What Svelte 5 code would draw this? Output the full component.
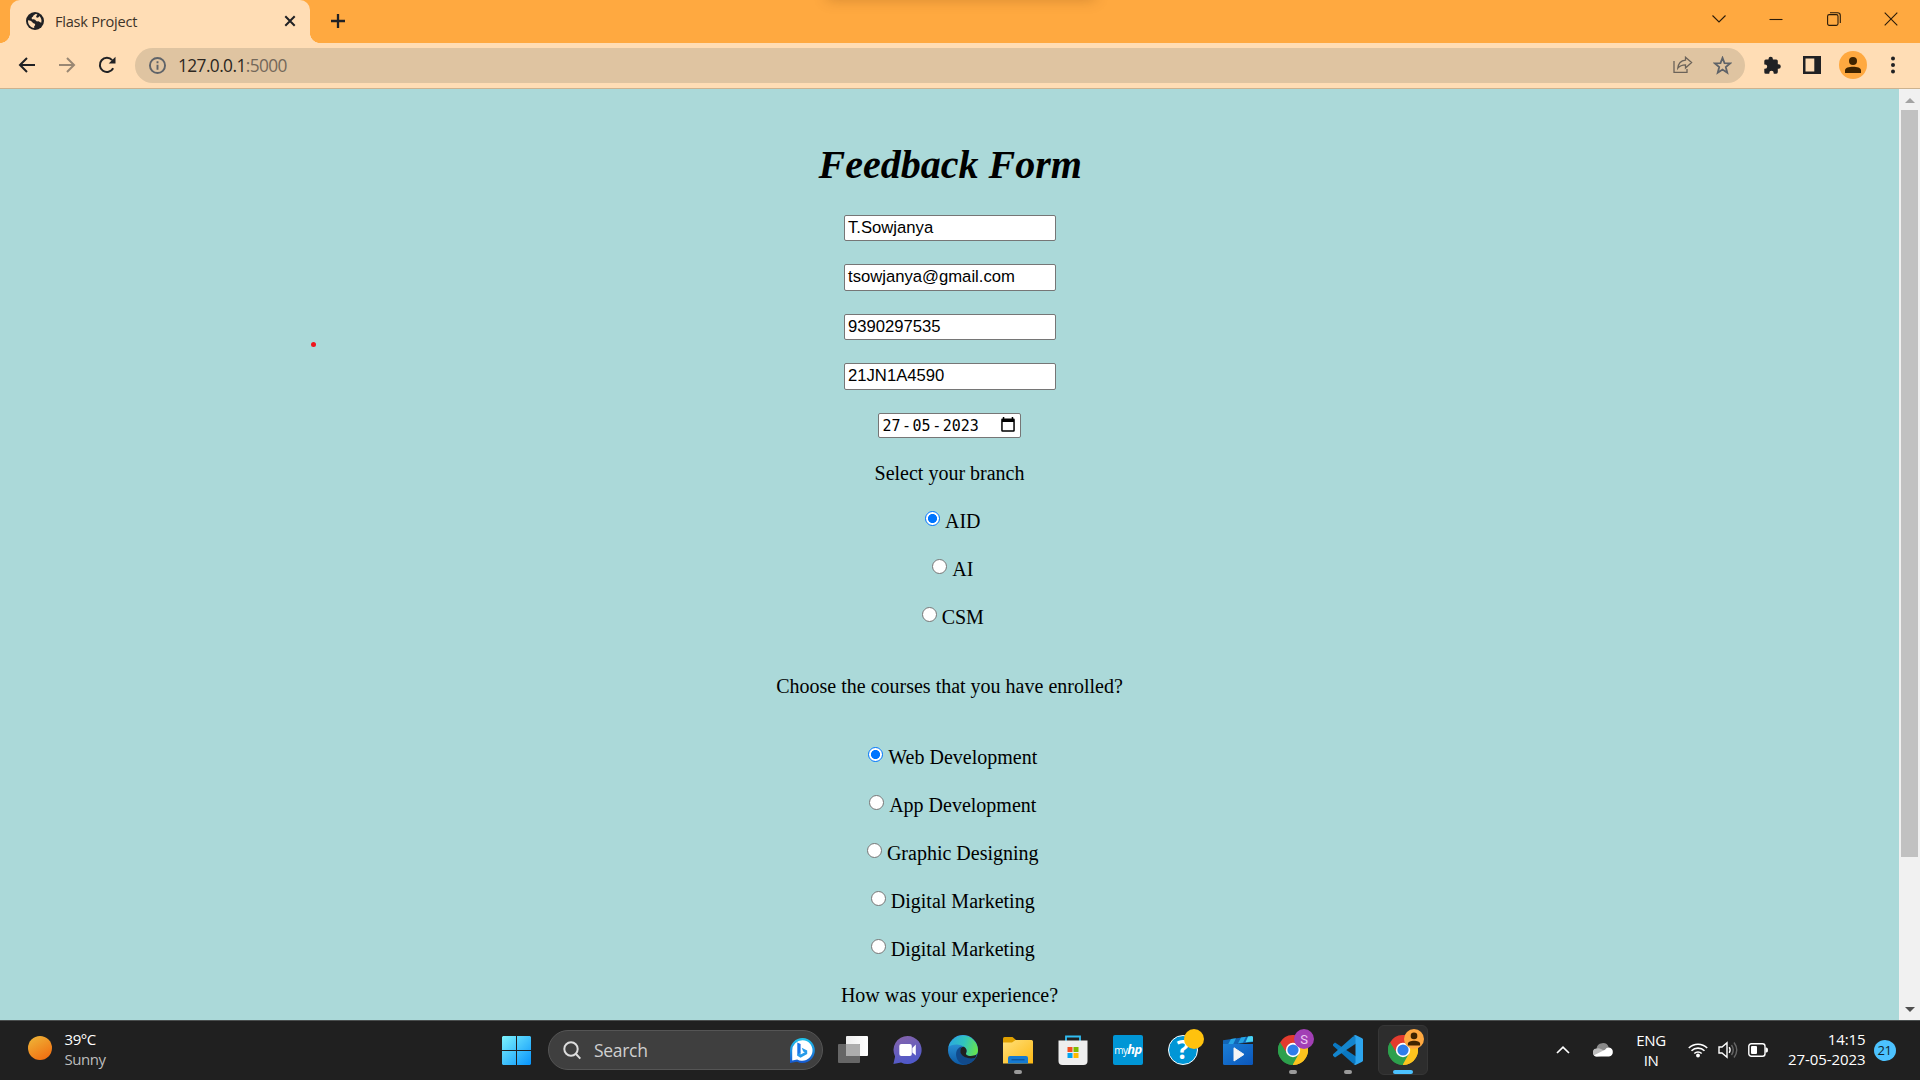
<script>
  const fields = [
    { value: 'T.Sowjanya', h: 26 },
    { value: 'tsowjanya@gmail.com', h: 27 },
    { value: '9390297535', h: 26 },
    { value: '21JN1A4590', h: 27 }
  ];
  const branches = ['AID', 'AI', 'CSM'];
  const courses = ['Web Development', 'App Development', 'Graphic Designing', 'Digital Marketing', 'Digital Marketing'];
</script>

{#snippet chromeLogo()}
  <svg class="app-icon" viewBox="0 0 30 30">
    <path d="M15 15 L2 7.5 A15 15 0 0 1 28 7.5 Z" fill="#e33b2e" />
    <path d="M15 15 L28 7.5 A15 15 0 0 1 15 30 Z" fill="#fcc31e" />
    <path d="M15 15 L15 30 A15 15 0 0 1 2 7.5 Z" fill="#2da04c" />
    <path d="M15 8H28.3A15 15 0 0 1 15 30L21 18.5Z" fill="#fcc31e" />
    <path d="M2 7.5L8.9 18.5L15 15V8Z" fill="#e33b2e" />
    <path d="M2 7.5L9 18.6Q12 22 15 22L21 18.6L14.5 30A15 15 0 0 1 2 7.5Z" fill="#2da04c" />
    <circle cx="15" cy="15" r="7.2" fill="#fff" />
    <circle cx="15" cy="15" r="5.6" fill="#2f7de9" />
  </svg>
{/snippet}

{#snippet choice(label, on)}
  <div class="choice">
    <span class="radio" class:on></span><span>{label}</span>
  </div>
{/snippet}

<div class="screen">
  <header class="tabs">
    <div class="tab">
      <svg class="globe" viewBox="0 0 18 18">
        <circle cx="9" cy="9" r="9" fill="#202124" />
        <path d="M9.6 1.9C8.8 2.8 7.4 2.7 7.2 4.1C7.1 5.4 5.7 5 5.6 6.1C5.5 7.4 7.1 7.4 8.3 7.5C9.9 7.6 9.7 9.6 11.3 9.4C12.6 9.2 13.6 9.9 15.2 10.8C16.1 8.2 15 5.4 13.2 4C13 5.5 11.2 6.2 10.3 5.2C9.6 4.2 11.3 3.5 11.3 2.3ZM2 8.2C1.7 12.3 4.6 15.8 8.2 16V14.2C9.1 13.8 9.6 12.7 8.8 11.8C7.8 10.9 7.2 11.5 6.4 10.2C5.6 8.8 3.8 8.5 2 8.2Z" fill="#ffddb5" />
      </svg>
      <span class="title">Flask Project</span>
      <svg class="close" viewBox="0 0 12 12"><path d="M1.3 1.3 10.7 10.7M10.7 1.3 1.3 10.7" /></svg>
    </div>
    <svg class="plus" viewBox="0 0 16 16"><path d="M8 1V15M1 8H15" /></svg>
    <div class="window-buttons">
      <svg viewBox="0 0 14 14"><path d="M.5 3.5 7 10 13.5 3.5" /></svg>
      <svg viewBox="0 0 14 14"><path d="M.5 7.5H13.5" /></svg>
      <svg viewBox="0 0 14 14"><rect x=".6" y="2.6" width="10.4" height="10.8" rx="1.6" /><path d="M3 .8H10.5Q13.3 .8 13.3 3.5V11" /></svg>
      <svg viewBox="0 0 14 14"><path d="M.7 .7 13.3 13.3M13.3 .7 .7 13.3" /></svg>
    </div>
    <i class="shade"></i>
  </header>

  <nav class="toolbar">
    <svg class="nav" viewBox="0 0 18 18"><path d="M17 9H2.5M9 2 2 9l7 7" /></svg>
    <svg class="nav faded" viewBox="0 0 18 18"><path d="M1 9H15.5M9 2l7 7-7 7" /></svg>
    <svg class="nav" viewBox="0 0 18 18"><path d="M15.2 12.3A7.1 7.1 0 1 1 14.2 4.1" /><path d="M17.5 .8V7.6H10.7Z" fill="#202124" stroke="none" /></svg>
    <div class="address">
      <svg class="info" viewBox="0 0 16 16"><circle cx="8" cy="8" r="7.1" /><path d="M8 7.2V12M8 4.1V5.8" /></svg>
      <span class="url">127.0.0.1<span>:5000</span></span>
      <svg class="share" viewBox="0 0 20 18"><path d="M1 5V16.3H14V13" /><path d="M12.5 1.2 18.6 6.6 12.5 12V8.8C8.5 8.8 6.5 10 4.8 12.2 5.2 8.2 7.5 4.8 12.5 4.2Z" /></svg>
      <svg class="star" viewBox="0 0 18 18"><path d="M9 1.8 10.9 6.7 16.2 7 12.1 10.4 13.5 15.8 9 12.8 4.5 15.8 5.9 10.4 1.8 7 7.1 6.7Z" /></svg>
    </div>
    <svg class="ext" viewBox="0 0 19 19"><path d="M5.5 3.5V3A2.2 2.2 0 0 1 9.9 3V3.5H13.3Q14.8 3.5 14.8 5V8.3H15.6A2.2 2.2 0 0 1 15.6 12.7H14.8V16Q14.8 17.7 13.2 17.7H10.7V17A2.2 2.2 0 0 0 6.3 17V17.7H2.8Q1.3 17.7 1.3 16.2V12.8H2A2.2 2.2 0 0 0 2 8.4H1.3V5Q1.3 3.5 2.8 3.5Z" /></svg>
    <svg class="panel" viewBox="0 0 18 18"><path fill-rule="evenodd" d="M0 0H18V18H0ZM2.5 2.5V15.5H11.3V2.5Z" /></svg>
    <span class="avatar"><svg viewBox="0 0 16 16"><circle cx="8" cy="4" r="4" /><path d="M0 16V13.3C0 8.7 16 8.7 16 13.3V16Z" /></svg></span>
    <svg class="dots" viewBox="0 0 4 18"><circle cx="2" cy="2.4" r="2" /><circle cx="2" cy="9" r="2" /><circle cx="2" cy="15.6" r="2" /></svg>
  </nav>

  <div class="viewport">
    <main>
      <i class="dot"></i>
      <h1>Feedback Form</h1>
      <div class="fields">
        {#each fields as f}
          <div class="slot"><div class="field" class:tall={f.h === 27}>{f.value}</div></div>
        {/each}
        <div class="field date">
          <div class="value">27<span>-</span>05<span>-</span>2023</div>
          <svg viewBox="0 0 14 15"><path fill-rule="evenodd" d="M1.8 0H3.3V1.5H10.7V0H12.2V1.5H12.7Q13.8 1.5 13.8 2.8V13.5Q13.8 14.8 12.5 14.8H1.5Q.2 14.8 .2 13.5V2.8Q.2 1.5 1.3 1.5H1.8ZM1.7 5.1V13.3H12.3V5.1Z" /></svg>
        </div>
      </div>
      <p class="branch">Select your branch</p>
      {#each branches as b, i}{@render choice(b, i === 0)}{/each}
      <p class="enrolled">Choose the courses that you have enrolled?</p>
      {#each courses as c, i}{@render choice(c, i === 0)}{/each}
      <p class="experience">How was your experience?</p>
    </main>
    <aside class="scroll">
      <svg viewBox="0 0 10 5"><path d="M5 0 10 5H0Z" fill="#a3a3a3" /></svg>
      <div class="thumb"></div>
      <svg class="down" viewBox="0 0 10 5"><path d="M0 0H10L5 5Z" fill="#505050" /></svg>
    </aside>
  </div>

  <footer>
    <div class="weather">
      <span class="sun"></span>
      <div><div>39°C</div><div class="dim">Sunny</div></div>
    </div>

    <div class="apps">
      <svg class="start" viewBox="0 0 29 29">
        <defs><linearGradient id="win" x1="0" y1="0" x2="29" y2="29" gradientUnits="userSpaceOnUse"><stop stop-color="#7df3fd" /><stop offset="1" stop-color="#0793fb" /></linearGradient></defs>
        <path d="M1 0H14V14H0V1ZM15 0H28L29 1V14H15ZM0 15H14V29H1L0 28ZM15 15H29V28L28 29H15Z" fill="url(#win)" />
      </svg>
      <div class="search">
        <svg class="lens" viewBox="0 0 19 19"><circle cx="8" cy="8" r="6.7" /><path d="M13 13 17.3 17.6" /></svg>
        <span>Search</span>
        <svg class="bing" viewBox="0 0 25 25">
          <defs><linearGradient id="bg" x2="0" y2="1"><stop stop-color="#20c5ec" /><stop offset="1" stop-color="#1557cf" /></linearGradient></defs>
          <path d="M12.5 0A12.5 12.5 0 1 1 7 23.8L0 25V12.5A12.5 12.5 0 0 1 12.5 0Z" fill="url(#bg)" />
          <path d="M12.5 2.2A10.3 10.3 0 1 1 7.2 21.5L2.2 22.4V12.5A10.3 10.3 0 0 1 12.5 2.2Z" fill="#fff" />
          <path d="M7.3 4.5 10.6 6V14.5L7.3 17.8Z" fill="#1a75e8" />
          <path d="M7.3 16.7V17.8L10.5 19.8 17.2 16V12.6L11.7 9.8 13.2 13.4 14.8 14.2 10.6 16.6V14Z" fill="#279bea" />
        </svg>
      </div>

      <div class="app"><svg class="app-icon" viewBox="0 0 30 30">
        <defs><linearGradient id="tv"><stop stop-color="#eee" /><stop offset="1" stop-color="#fff" /></linearGradient></defs>
        <rect x="8" y="1" width="22" height="20" rx="1" fill="url(#tv)" /><rect y="9" width="22" height="19" rx="1" fill="#666" /><path d="M8 9H21Q22 9 22 10V21H8Z" fill="#adadad" />
      </svg></div>

      <div class="app"><svg class="app-icon" viewBox="0 0 30 30">
        <defs><linearGradient id="chat" x2="0.3" y2="1"><stop stop-color="#8864a9" /><stop offset="1" stop-color="#5059c9" /></linearGradient></defs>
        <path d="M14.6 1A14 14 0 1 1 8.1 27.4L.4 29 2.1 21.5A14 14 0 0 1 14.6 1Z" fill="url(#chat)" />
        <rect x="6.3" y="9" width="12.5" height="12" rx="2" fill="#fff" /><path d="M19.3 13 22.8 9.5V20.5L19.3 17.5Z" fill="#fff" />
      </svg></div>

      <div class="app"><svg class="app-icon" viewBox="0 0 30 30">
        <defs>
          <linearGradient id="e1" x1="0" y1="0.4" x2="1" y2="0.6"><stop stop-color="#2aa9e0" /><stop offset=".5" stop-color="#31c5bd" /><stop offset="1" stop-color="#67e44b" /></linearGradient>
          <linearGradient id="e2" x2="0" y2="1"><stop stop-color="#35a6e8" /><stop offset="1" stop-color="#0c59a4" /></linearGradient>
        </defs>
        <circle cx="15" cy="15" r="15" fill="url(#e2)" />
        <path d="M.5 12A15 15 0 0 1 30 15C30 20.2 26 21 22.5 21 18.5 21 17.3 19.2 18.3 17.5 19.5 15.5 17.4 10.5 10.5 9.7 6 9.2 2 10.3 .5 12Z" fill="url(#e1)" />
        <path d="M8.2 21C7.5 15 10.5 12 14.5 11.5 11.5 14 12 18.5 15.5 21 18.5 23.2 23 24 27.5 22.8A15 15 0 0 1 18 29.7C13 29.7 9 26 8.2 21Z" fill="#114a8b" />
        <path d="M18.3 17.5C17.3 19.2 18.5 21 22.5 21 25.5 21 27.5 20.6 28.8 19.3L27.4 22.8C20.5 24.8 12 21.5 12.3 15.8 12.4 13 14 11.5 16 11.7 18.5 13 19.2 15.8 18.3 17.5Z" fill="#202020" />
      </svg></div>

      <div class="app"><svg class="app-icon" viewBox="0 0 30 30">
        <defs><linearGradient id="fold" x2="1" y2="1"><stop stop-color="#ffe07a" /><stop offset="1" stop-color="#fdb813" /></linearGradient></defs>
        <path d="M0 3.5Q0 2 1.5 2H9.5L13 5V10H0Z" fill="#dfa000" />
        <path d="M0 7.5H9L12.5 5H28.5Q30 5 30 6.5V28.5H0Z" fill="url(#fold)" />
        <path d="M5 28.5V23Q5 21 7 21H23Q25 21 25 23V28.5Z" fill="#157ad1" /><path d="M8.5 24.8H21.5" stroke="#0a4b8c" />
      </svg><b class="run"></b></div>

      <div class="app"><svg class="app-icon" viewBox="0 0 30 30">
        <path d="M8 7V1.5H22V7" fill="none" stroke="#31bdf2" stroke-width="1.8" />
        <path d="M.5 5.5H29.5V26Q29.5 30 25.5 30H4.5Q.5 30 .5 26Z" fill="#eee" />
        <path d="M9.5 12H14.5V17H9.5Z" fill="#f25022" /><path d="M15.5 12H20.5V17H15.5Z" fill="#7fba00" /><path d="M9.5 18H14.5V23H9.5Z" fill="#00a4ef" /><path d="M15.5 18H20.5V23H15.5Z" fill="#ffb900" />
      </svg></div>

      <div class="app"><div class="hp">my<b>hp</b></div></div>

      <div class="app"><div class="help">?</div><i class="badge yellow"></i></div>

      <div class="app"><svg class="app-icon" viewBox="0 0 30 30">
        <defs><linearGradient id="mv" x2="1" y2="1"><stop stop-color="#1b7fd6" /><stop offset="1" stop-color="#0b56bb" /></linearGradient></defs>
        <path d="M0 5.2 29 1 30 2V7L6 10H0Z" fill="#1265b5" /><path d="M8 4 13 3.3 10 9.5H5ZM18 2.6 23 1.8 20 7.6 15 8.5Z" fill="#25a5e5" /><path d="M25 1.5 29 1 30 2V6.5L22.5 7.3Z" fill="#49d4f5" />
        <path d="M0 9H30V28.5Q30 30 28.5 30H1.5Q0 30 0 28.5Z" fill="url(#mv)" /><path d="M11 12.8V26L21 19.4Z" fill="#f5f5f5" stroke="#f5f5f5" stroke-linejoin="round" />
      </svg></div>

      <div class="app">{@render chromeLogo()}<i class="badge purple">S</i><b class="run"></b></div>

      <div class="app"><svg class="app-icon" viewBox="0 0 30 30">
        <path d="M2 7.5 0 9.2V10.8L20 28.5 23 29V21.5Z" fill="#0a78c2" /><path d="M2 22.5 0 20.8V19.2L20 1.5 23 1V8.5Z" fill="#1485cd" /><path d="M22.5 0 29.2 3.2 30 4.3V25.7L29.2 26.8 22.5 30 20.5 29.2 22.5 28V2L20.5 .8Z" fill="#2da5ee" />
      </svg><b class="run"></b></div>

      <div class="app active">{@render chromeLogo()}<i class="badge person"><svg viewBox="0 0 16 16"><circle cx="8" cy="4.5" r="3.8" /><path d="M1 15.5V13.3C1 8.8 15 8.8 15 13.3V15.5Z" /></svg></i><b class="run"></b></div>
    </div>

    <div class="tray">
      <svg class="up" viewBox="0 0 14 8"><path d="M1 7 7 1.2 13 7" /></svg>
      <svg class="cloud" viewBox="0 0 20 14"><path d="M3.5 6A6.3 6.3 0 0 1 15.8 4.5L11 9 3 8Z" fill="#8a8a8a" /><path d="M4 13.5A4 4 0 0 1 3.5 5.5Q6 4.8 8 6L14 9 8 13Z" fill="#bcbcbc" /><path d="M3 13.5Q1.5 13.3 1 12.2L12 6.8Q13.5 4.5 16 4.6A4.5 4.5 0 0 1 16 13.5Z" fill="#fff" /></svg>
      <div class="lang"><div>ENG</div><div>IN</div></div>
      <svg class="wifi" viewBox="0 0 20 16"><path d="M.8 6A13 13 0 0 1 19.2 6M3.5 8.8A9.2 9.2 0 0 1 16.5 8.8M6.3 11.5A5.3 5.3 0 0 1 13.7 11.5" /><circle cx="10" cy="13.5" r="1.9" /></svg>
      <svg class="sound" viewBox="0 0 20 18"><path d="M1 6H4L9 1.7V16.3L4 12H1Z" /><path d="M11.2 6.2Q13 9 11.2 11.8" /><path class="quiet" d="M13.5 4Q17 9 13.5 14M16 1.5Q21.5 9 16 16.5" /></svg>
      <svg class="battery" viewBox="0 0 20 14"><rect x=".8" y=".8" width="16.2" height="12.4" rx="2.5" fill="none" stroke="#fff" stroke-width="1.4" /><rect x="3" y="3" width="6" height="8" rx="1" fill="#fff" /><path d="M17.5 4.5H18.5Q20 4.5 20 7T18.5 9.5H17.5Z" fill="#fff" /></svg>
      <div class="clock"><div>14:15</div><div>27-05-2023</div></div>
      <span class="count">21</span>
    </div>
  </footer>
</div>

<style>
  :global(body) { margin: 0; overflow: hidden; }
  .screen { width: 1920px; height: 1080px; display: flex; flex-direction: column; overflow: hidden; font-family: "Open Sans", "Noto Sans", sans-serif; }
  .screen *, .screen { box-sizing: border-box; }
  svg { display: block; flex: none; }

  .tabs { height: 43px; background: #ffa940; display: flex; align-items: center; padding-left: 10px; flex: none; position: relative; overflow: hidden; }
  .shade { position: absolute; left: 830px; top: -14px; width: 262px; height: 8px; box-shadow: 0 3px 14px 3px rgba(90, 50, 10, .25); }
  .tab { width: 300px; height: 43px; background: #ffddb5; border-radius: 10px 10px 0 0; display: flex; align-items: center; padding: 0 14px 1px 16px; position: relative; }
  .tab::before, .tab::after { content: ""; position: absolute; bottom: 0; width: 10px; height: 10px; }
  .tab::before { left: -10px; background: radial-gradient(circle at 0 0, #ffa940 9.6px, #ffddb5 10.2px); }
  .tab::after { right: -10px; background: radial-gradient(circle at 100% 0, #ffa940 9.6px, #ffddb5 10.2px); }
  .globe { width: 18px; height: 18px; }
  .title { font-size: 14.6px; color: #3d3328; margin: -1px 0 0 11px; flex: 1; letter-spacing: -.25px; }
  .close { width: 12px; stroke: #202124; stroke-width: 2; fill: none; }
  .plus { width: 16px; margin: -1px 0 0 19.5px; stroke: #202124; stroke-width: 2.3; fill: none; }
  .window-buttons { margin-left: auto; display: flex; gap: 43.5px; padding-right: 22px; margin-top: -6px; }
  .window-buttons svg { width: 14px; stroke: #2b1c0a; fill: none; stroke-width: 1.1; }

  .toolbar { height: 46px; background: #ffddb5; border-bottom: 1px solid #ccb28f; display: flex; align-items: center; padding: 0 25.5px 1px 18px; flex: none; }
  .nav { width: 18px; height: 18px; margin-right: 22px; stroke: #202124; stroke-width: 2; fill: none; }
  .nav.faded { opacity: .45; }
  .address { width: 1610px; height: 35px; border-radius: 18px; background: #dfc4a1; display: flex; align-items: center; padding: 0 13px 0 14px; margin-left: -3px; flex: none; }
  .info { width: 17px; stroke: #5f6368; fill: none; stroke-width: 1.8; }
  .url { font-size: 17.3px; color: #2c2721; flex: 1; margin-left: 12px; letter-spacing: -.58px; }
  .url span { color: #74685a; }
  .share { width: 20px; margin-right: 20.5px; stroke: #6c6359; stroke-width: 1.3; fill: none; }
  .star { width: 19px; stroke: #5f6368; stroke-width: 1.7; fill: none; }
  .ext { width: 19px; margin-left: 18px; fill: #202124; }
  .panel { width: 18px; margin-left: 21px; fill: #202124; }
  .avatar { width: 28px; height: 28px; border-radius: 50%; background: #ffa940; margin-left: 18px; display: flex; align-items: center; justify-content: center; }
  .avatar svg { width: 16px; fill: #3f2400; }
  .dots { width: 4px; margin-left: auto; fill: #202124; }

  .viewport { height: 931px; display: flex; flex: none; background: #abd9d9; }
  main { width: 1899px; position: relative; overflow: hidden; font-family: "Liberation Serif", "Times New Roman", serif; font-size: 20px; line-height: 24px; color: #000; text-align: center; }
  .dot { position: absolute; left: 311px; top: 253px; width: 5px; height: 5px; border-radius: 50%; background: #f0141c; }
  h1 { font-size: 40px; line-height: 46px; font-weight: bold; font-style: italic; margin: 53px 0 27px; padding-left: 1.5px; }
  .fields { display: flex; flex-direction: column; align-items: center; }
  .slot { height: 49.4px; }
  .field { width: 212px; height: 26px; background: #fff; border: 1px solid #767676; border-radius: 2px; font: 16.67px/23px "Liberation Sans", Arial, sans-serif; text-align: left; padding-left: 3.5px; }
  .tall { height: 27px; }
  .date { width: 143px; height: 25px; display: flex; align-items: center; justify-content: space-between; padding: 0 5px 0 3.5px; }
  .value { font-family: "DejaVu Sans Mono", monospace; font-size: 15px; line-height: 22px; margin-top: 1px; }
  .value span { padding: 0 1.5px; }
  .date svg { width: 14px; margin-top: -2px; }
  p { margin: 0; }
  .branch { margin-top: 23.4px; margin-bottom: 24px; }
  .choice { height: 24px; margin-bottom: 24px; display: flex; justify-content: center; padding-left: 6.5px; }
  .radio { width: 15px; height: 15px; border: 1px solid #767676; border-radius: 50%; background: #fff; margin: 2px 5px 0 0; }
  .radio.on { border: 1.5px solid #0075ff; background: radial-gradient(circle, #0075ff 4.2px, #fff 4.9px); }
  .enrolled { margin: 45px 0 47px; }
  .experience { margin-top: -2px; }

  .scroll { width: 21px; background: #f1f1f1; display: flex; flex-direction: column; align-items: center; padding: 9px 0 8px; }
  .scroll svg { width: 10px; }
  .thumb { width: 17px; height: 747px; margin-top: 7px; background: #c1c1c1; }
  .down { margin-top: auto; }

  footer { height: 60px; background: #202020; border-top: 1px solid #4a4e4e; color: #fff; display: flex; font-size: 15px; line-height: 20px; }
  .weather { width: 500px; display: flex; padding: 8px 0 0 28px; letter-spacing: -.45px; }
  .sun { width: 24px; height: 24px; margin: 7px 12.5px 0 0; border-radius: 50%; background: linear-gradient(150deg, #eeb93a, #f2660c); }
  .dim { color: #bdbdbd; }
  .apps { display: flex; align-items: center; width: 940px; padding: 0 0 1px 2px; }
  .start { width: 29px; margin: 1px 17px 0 0; }
  .search { width: 275px; height: 40px; border: 1px solid #555; border-radius: 20px; background: #3f3f3f; display: flex; align-items: center; padding: 0 7px 0 14px; color: #cfcfcf; font-size: 17.5px; letter-spacing: -.3px; }
  .lens { width: 19px; stroke: #ddd; stroke-width: 2; fill: none; margin-right: 12px; }
  .bing { width: 25px; margin-left: auto; }
  .app { width: 50px; height: 50px; margin-right: 5px; display: flex; align-items: center; justify-content: center; position: relative; border-radius: 6px; flex: none; }
  .search + .app { margin-left: 5px; }
  .app-icon { width: 30px; height: 30px; }
  .active { background: #2d2d2d; border: 1px solid #363636; }
  .run { position: absolute; bottom: 1px; left: 21px; width: 8px; height: 4px; border-radius: 2px; background: #9a9a9a; }
  .active .run { left: 14px; bottom: 0; width: 20px; background: #4cc2ff; }
  .hp { width: 30px; height: 30px; border-radius: 2px; background: #0096d6; font: 10px/29px "Open Sans", sans-serif; text-align: center; letter-spacing: -.6px; }
  .hp b { font-size: 13px; font-style: italic; }
  .help { width: 30px; height: 30px; border: 1.5px solid #fff; border-radius: 50%; background: #0096d6; font: bold 26px/27px "Open Sans", sans-serif; text-align: center; }
  .badge { position: absolute; left: 26px; top: 4px; width: 20px; height: 20px; border-radius: 50%; display: flex; align-items: center; justify-content: center; }
  .yellow { background: #ffc20e; }
  .purple { background: #a23fb5; color: #ecc9f2; font: 13px Roboto, sans-serif; }
  .person { left: 25px; top: 3px; background: #ffa940; }
  .person svg { width: 14px; fill: #3f2400; }
  .tray { display: flex; align-items: center; width: 480px; padding: 0 0 1px 116px; }
  .up { width: 14px; stroke: #fff; stroke-width: 1.7; fill: none; }
  .cloud { width: 20px; margin-left: 22.5px; }
  .lang { width: 34px; text-align: center; margin: -1px 0 0 21.5px; letter-spacing: -.4px; }
  .wifi { width: 20px; margin-left: 20px; fill: #fff; }
  .wifi path { fill: none; stroke: #fff; stroke-width: 1.6; }
  .sound { width: 20px; margin-left: 9.5px; stroke: #fff; stroke-width: 1.4; fill: none; }
  .quiet { stroke: #666; }
  .battery { width: 20px; margin-left: 10px; }
  .clock { width: 80px; text-align: right; margin: -2px 0 0 18px; letter-spacing: -.08px; white-space: nowrap; }
  .count { width: 22px; height: 21px; border-radius: 50%; background: #4cc2ff; color: #10222c; font-size: 13px; line-height: 20px; text-align: center; letter-spacing: -.5px; margin-left: 8px; }
</style>
